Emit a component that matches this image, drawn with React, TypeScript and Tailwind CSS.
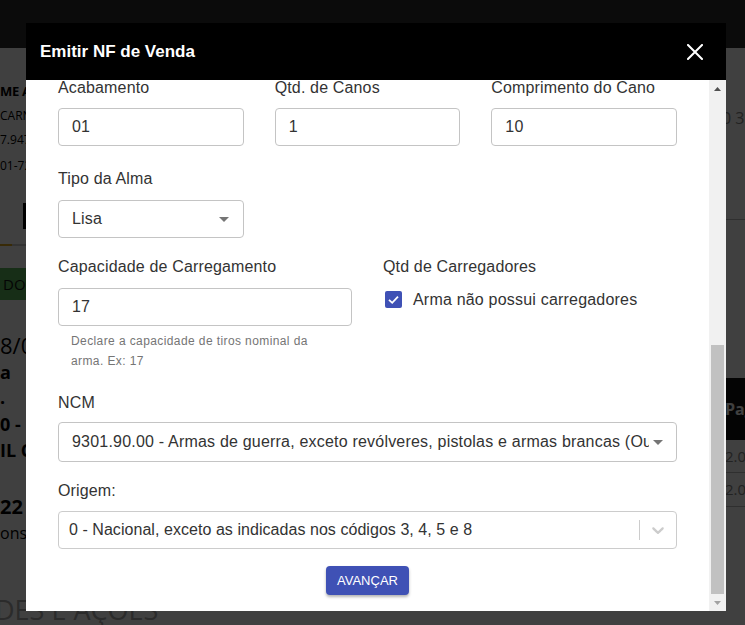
import React from 'react';

/* ── small drawn bits ── */
const Caret = () => (
  <svg width="10" height="5" viewBox="0 0 10 5" className="shrink-0">
    <path d="M0 0 L5 5 L10 0 Z" fill="#757575" />
  </svg>
);

const Chevron = () => (
  <svg width="20" height="20" viewBox="0 0 20 20" className="shrink-0">
    <path
      fill="#cccccc"
      d="M4.516 7.548c0.436-0.446 1.043-0.481 1.576 0l3.908 3.747 3.908-3.747c0.533-0.481 1.141-0.446 1.574 0 0.436 0.445 0.408 1.197 0 1.615-0.406 0.418-4.695 4.502-4.695 4.502-0.217 0.223-0.502 0.335-0.787 0.335s-0.57-0.112-0.789-0.335c0 0-4.287-4.084-4.695-4.502s-0.436-1.17 0-1.615z"
    />
  </svg>
);

const Label = ({ children }: { children: React.ReactNode }) => (
  <div className="text-[16px] leading-[16px] h-[16px] tracking-[0.15px] text-[#333] whitespace-nowrap">{children}</div>
);

const TextInput = ({ value }: { value: string }) => (
  <div className="h-[38px] border border-[#c4c4c4] rounded-[4px] px-[13px] flex items-center text-[16px] tracking-[0.2px] text-[#333]">
    {value}
  </div>
);

const NativeSelect = ({ value, h = 'h-[38px]', pr = 'pr-[14px]' }: { value: string; h?: string; pr?: string }) => (
  <div className={`${h} ${pr} border border-[#c4c4c4] rounded-[4px] pl-[13px] flex items-center text-[16px] tracking-[0.2px] text-[#333] min-w-0`}>
    <div className="flex-1 min-w-0 overflow-hidden whitespace-nowrap mr-[4px]">{value}</div>
    <Caret />
  </div>
);

/* ── dimmed page behind the dialog ── */
const BackgroundPage = () => (
  <div className="min-h-screen bg-white overflow-hidden font-['Open_Sans',sans-serif] text-black">
    <div className="h-[48px] bg-[#2c2c2c]" />
    <div className="flex justify-between">
      {/* left edge */}
      <div className="w-[80px] whitespace-nowrap">
        <div className="mt-[32px] h-[24px] flex items-center text-[13px] font-bold tracking-[-0.3px]">ME ARMAS LTDA</div>
        <div className="h-[23px] flex items-center text-[12px]">CARNEIRO</div>
        <div className="h-[26px] flex items-center text-[12px]">7.947.001</div>
        <div className="h-[26px] flex items-center text-[12px]">01-72</div>
        <div className="mt-[24px] h-[26px] ml-[23px] w-[50px] bg-black" />
        <div className="mt-[15px] h-[2px] bg-[#cccccc] flex">
          <div className="w-[12px] bg-[#e0a91c]" />
        </div>
        <div className="mt-[22px] h-[32px] bg-[#5cb85c] flex items-center pl-[3px] text-[15px] text-[#111]">DOCUMENTOS</div>
        <div className="mt-[30px] h-[30px] flex items-center text-[22px]">8/01</div>
        <div className="h-[25px] flex items-center text-[18px] font-bold">a</div>
        <div className="h-[25px] flex items-center text-[18px] font-bold">.</div>
        <div className="h-[28px] flex items-center text-[18px] font-bold">0 - IT</div>
        <div className="h-[25px] flex items-center text-[18px] font-bold">IL CA</div>
        <div className="mt-[31px] h-[26px] flex items-center text-[20px] font-bold">22</div>
        <div className="h-[26px] flex items-center text-[16px]">onsumo</div>
        <div className="mt-[50px] h-[28px] flex items-center text-[27px] text-[#aaaaaa] -ml-[5px]">DES E AÇÕES</div>
      </div>

      {/* right edge */}
      <div className="w-[23px] overflow-hidden whitespace-nowrap">
        <div className="mt-[58px] h-[24px] flex items-center text-[16px] text-[#888]">0 3</div>
        <div className="mt-[89px] h-[1px] bg-[#bbbbbb]" />
        <div className="mt-[158px] h-[62px] bg-[#111] flex items-center pl-[3px] text-[16px] font-bold text-white">Pag</div>
        <div className="h-[33px] border-b border-[#bbbbbb] flex items-center pl-[3px] text-[15px] text-[#888]">2.00</div>
        <div className="h-[34px] border-b border-[#bbbbbb] flex items-center pl-[3px] text-[15px] text-[#888]">2.00</div>
      </div>
    </div>
  </div>
);

const App = () => {
  return (
    <>
      <BackgroundPage />

      {/* Overlay + dialog */}
      <div className="fixed inset-0 bg-black/75 flex items-start pl-[26px] font-['Liberation_Sans',Arial,sans-serif]">
        <div className="mt-[23px] w-[700px] h-[588px] shrink-0 bg-white flex flex-col">
          {/* Header */}
          <header className="h-[57px] shrink-0 bg-black flex items-center justify-between pl-[14px] pr-[23px]">
            <h1 className="text-white text-[17px] font-bold">Emitir NF de Venda</h1>
            <svg width="16" height="16" viewBox="0 0 16 16">
              <path d="M1 1 L15 15 M15 1 L1 15" stroke="white" strokeWidth="2" strokeLinecap="square" />
            </svg>
          </header>

          <div className="flex-1 flex min-h-0">
            {/* Form body */}
            <div className="flex-1 min-w-0 px-[32px] pb-[16px]">
              <div className="grid grid-cols-3 gap-x-[31px]">
                <div className="min-w-0">
                  <Label>Acabamento</Label>
                  <div className="mt-[12px]"><TextInput value="01" /></div>
                </div>
                <div className="min-w-0">
                  <Label>Qtd. de Canos</Label>
                  <div className="mt-[12px]"><TextInput value="1" /></div>
                </div>
                <div className="min-w-0">
                  <Label>Comprimento do Cano</Label>
                  <div className="mt-[12px]"><TextInput value="10" /></div>
                </div>
              </div>

              <div className="grid grid-cols-3 gap-x-[31px] mt-[25px]">
                <div className="min-w-0">
                  <Label>Tipo da Alma</Label>
                  <div className="mt-[13px]"><NativeSelect value="Lisa" /></div>
                </div>
              </div>

              <div className="grid grid-cols-2 gap-x-[31px] mt-[21px]">
                <div className="min-w-0">
                  <Label>Capacidade de Carregamento</Label>
                  <div className="mt-[13px]"><TextInput value="17" /></div>
                  <p className="mt-[5px] ml-[13px] mr-[14px] text-[12px] leading-[20px] tracking-[0.4px] text-[#757575]">
                    Declare a capacidade de tiros nominal da arma. Ex: 17
                  </p>
                </div>
                <div className="min-w-0">
                  <Label>Qtd de Carregadores</Label>
                  <div className="mt-[15px] h-[19px] flex items-center pl-[2px]">
                    <div className="w-[17px] h-[17px] shrink-0 rounded-[2px] bg-[#3f51b5] flex items-center justify-center">
                      <svg width="13" height="13" viewBox="0 0 13 13">
                        <path d="M2 6.8 L5.2 9.8 L11 3.6" fill="none" stroke="white" strokeWidth="1.8" />
                      </svg>
                    </div>
                    <span className="ml-[11px] text-[16px] leading-[19px] tracking-[0.2px] text-[#333] whitespace-nowrap">
                      Arma não possui carregadores
                    </span>
                  </div>
                </div>
              </div>

              <div className="mt-[24px]">
                <Label>NCM</Label>
                <div className="mt-[11px]">
                  <NativeSelect
                    h="h-[40px]"
                    pr="pr-[13px]"
                    value="9301.90.00 - Armas de guerra, exceto revólveres, pistolas e armas brancas (Outras)"
                  />
                </div>
              </div>

              <div className="mt-[21px]">
                <Label>Origem:</Label>
                <div className="mt-[12px] h-[38px] border border-[#cccccc] rounded-[4px] flex items-center">
                  <div className="flex-1 min-w-0 pl-[10px] text-[16px] tracking-[0.05px] text-[#333] whitespace-nowrap overflow-hidden">
                    0 - Nacional, exceto as indicadas nos códigos 3, 4, 5 e 8
                  </div>
                  <div className="w-[1px] h-[20px] bg-[#cccccc]" />
                  <div className="px-[8px] flex items-center">
                    <Chevron />
                  </div>
                </div>
              </div>

              <div className="mt-[17px] flex justify-center">
                <button className="h-[29px] px-[11px] rounded-[4px] bg-[#3f51b5] text-white text-[13px] font-medium uppercase shadow-[0_2px_3px_rgba(0,0,0,0.3)]">
                  Avançar
                </button>
              </div>
            </div>

            {/* Scrollbar */}
            <div className="w-[17px] shrink-0 bg-[#f1f1f1] flex flex-col">
              <div className="h-[17px] flex items-center justify-center">
                <svg width="7" height="4" viewBox="0 0 7 4"><path d="M0 4 L3.5 0 L7 4 Z" fill="#505050" /></svg>
              </div>
              <div className="flex-1" />
              <div className="h-[249px] mx-[2px] bg-[#c1c1c1]" />
              <div className="h-[17px] flex items-center justify-center">
                <svg width="7" height="4" viewBox="0 0 7 4"><path d="M0 0 L3.5 4 L7 0 Z" fill="#a3a3a3" /></svg>
              </div>
            </div>
          </div>
        </div>
      </div>
    </>
  );
};

export default App;
